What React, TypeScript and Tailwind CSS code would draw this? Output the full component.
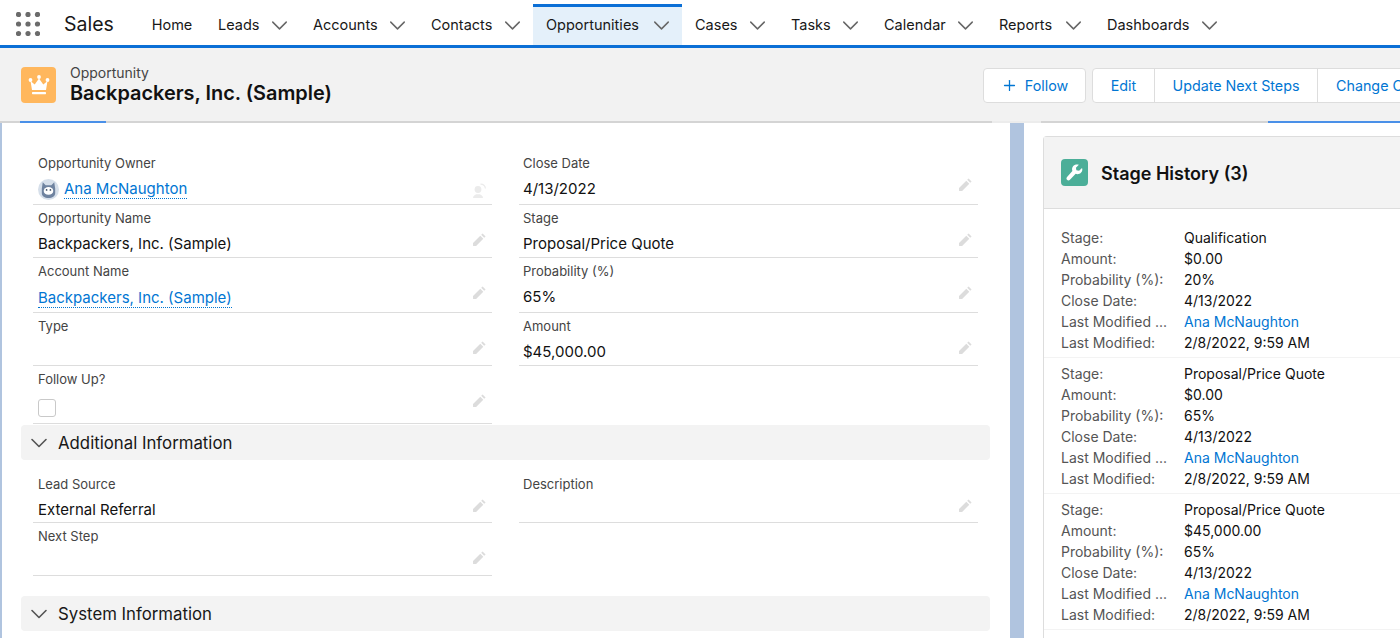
import { ChevronDown, Plus } from 'lucide-react';

const navItems = [
  { name: 'Leads', width: 'w-[95px]' },
  { name: 'Accounts', width: 'w-[118px]' },
  { name: 'Contacts', width: 'w-[115px]' },
  { name: 'Opportunities', width: 'w-[149px]' },
  { name: 'Cases', width: 'w-[96px]' },
  { name: 'Tasks', width: 'w-[93px]' },
  { name: 'Calendar', width: 'w-[115px]' },
  { name: 'Reports', width: 'w-[108px]' },
  { name: 'Dashboards', width: 'w-[136px]' },
];

function Pencil() {
  return (
    <svg viewBox="0 0 16 16" className="w-[16px] h-[16px] text-[#dcdcdc]" fill="currentColor">
      <path d="M11.6 1.4l3 3-1.4 1.4-3-3zM9.3 3.7l3 3-7.2 7.2-3 .1-.1-3z" />
    </svg>
  );
}

function ChangeOwner() {
  return (
    <svg viewBox="0 0 16 16" className="w-[16px] h-[16px] text-[#ebebeb]" fill="currentColor">
      <circle cx="7" cy="6.5" r="3.4" />
      <path d="M2 15c0-2.4 2-3.2 3.4-3.7h3.2c1.4.5 3.4 1.3 3.4 3.7z" />
      <path d="M9.5 1.2c2.6 0 4.6 1.7 4.9 4.3" fill="none" stroke="currentColor" strokeWidth="1.2" />
    </svg>
  );
}

function Field({ label, children, height, icon = 'pencil', right }: { label: string; children?: React.ReactNode; height: string; icon?: 'pencil' | 'owner'; right?: boolean }) {
  return (
    <div className={`relative border-b border-[#dddddd] ${right ? 'pl-[4px]' : 'pl-[5px]'} ${height}`}>
      <div className="text-[13px] leading-[18px] text-[#444444] pt-[4px] h-[24px]">{label}</div>
      <div className="text-[15px] leading-[20px] text-[#111111] mt-[5px]">{children}</div>
      {icon === 'pencil' && (
        <div className="absolute right-[5px] top-[27px]">
          <Pencil />
        </div>
      )}
      {icon === 'owner' && (
        <div className="absolute right-[5px] bottom-[5px]">
          <ChangeOwner />
        </div>
      )}
    </div>
  );
}

function Section({ title }: { title: string }) {
  return (
    <div className="ml-[21px] mr-[20px] h-[35px] flex items-center rounded-[4px] bg-[#f3f3f3] pl-[4px] gap-[5px] text-[#181818]">
      <ChevronDown className="w-[28px] h-[28px] text-[#555555]" strokeWidth={1.4} />
      <span className="text-[16.8px] leading-[24px]">{title}</span>
    </div>
  );
}

function HistoryRow({ label, value, link }: { label: string; value: string; link?: boolean }) {
  return (
    <div className="flex h-[21px] items-center text-[14px]">
      <span className="w-[123px] shrink-0 text-[#555555]">{label}</span>
      <span className={link ? 'text-[#0176d3]' : 'text-[#111111]'}>{value}</span>
    </div>
  );
}

function HistoryGroup({ stage, amount, probability }: { stage: string; amount: string; probability: string }) {
  return (
    <div className="pl-[17px] pb-[4px] pt-[5px] border-b border-[#f3f3f3]">
      <HistoryRow label="Stage:" value={stage} />
      <HistoryRow label="Amount:" value={amount} />
      <HistoryRow label="Probability (%):" value={probability} />
      <HistoryRow label="Close Date:" value="4/13/2022" />
      <HistoryRow label="Last Modified ..." value="Ana McNaughton" link />
      <HistoryRow label="Last Modified:" value="2/8/2022, 9:59 AM" />
    </div>
  );
}

export default function App() {
  return (
    <div className="w-[1400px] h-[638px] overflow-hidden bg-white font-['Inter',sans-serif] flex flex-col">
      {/* App nav */}
      <nav className="h-[48px] shrink-0 border-b-[3px] border-[#0b6fd6] flex items-stretch">
        <div className="w-[64px] flex items-center pl-[16px] pt-[3px] shrink-0">
          <svg viewBox="0 0 24 24" className="w-[24px] h-[24px] text-[#6b6b6b]" fill="currentColor">
            {[2.5, 12, 21.5].map((y) =>
              [2.5, 12, 21.5].map((x) => <circle key={`${x}-${y}`} cx={x} cy={y} r="2.6" />)
            )}
          </svg>
        </div>
        <div className="w-[75px] flex items-center pt-[5px] text-[19.5px] text-[#181818] shrink-0">Sales</div>
        <div className="w-[66px] flex items-center justify-center pt-[5px] text-[14.5px] text-[#181818] shrink-0">Home</div>
        {navItems.map((item) => (
          <div
            key={item.name}
            className={`flex items-center justify-between px-[13px] text-[14.5px] text-[#181818] shrink-0 mt-[4px] border-t-[3px] ${item.width} ${
              item.name === 'Opportunities' ? 'bg-[#e4f0fa] border-[#0b6fd6]' : 'border-transparent'
            }`}
          >
            <span className="-mt-[3px]">{item.name}</span>
            <ChevronDown className="w-[27px] h-[27px] text-[#666666] -mr-[6px] -mt-[1px]" strokeWidth={1.3} />
          </div>
        ))}
      </nav>

      {/* Record header */}
      <header className="relative h-[75px] shrink-0 bg-[#f2f2f2] border-b-[2px] border-[#d4d4d4] flex items-center justify-between">
        <div className="flex items-center pl-[21px] gap-[14px]">
          <div className="w-[35px] h-[36px] rounded-[4px] bg-[#ffb75d] flex items-center justify-center">
            <svg viewBox="0 0 24 24" className="w-[24px] h-[24px] text-white" fill="currentColor">
              <circle cx="3.5" cy="7" r="1.9" />
              <circle cx="12" cy="4" r="1.9" />
              <circle cx="20.5" cy="7" r="1.9" />
              <path d="M3.5 8l4.2 3.4L12 5.5l4.3 5.9L20.5 8 19 17H5z" />
              <rect x="5" y="19" width="14" height="2.2" rx="0.6" />
            </svg>
          </div>
          <div className="-mt-[1px]">
            <div className="text-[14px] leading-[18px] text-[#444444]">Opportunity</div>
            <div className="text-[19.9px] leading-[22px] font-semibold text-[#111111]">Backpackers, Inc. (Sample)</div>
          </div>
        </div>
        <div className="flex w-[417px] shrink-0 gap-[6px] overflow-hidden mt-[2px] text-[14.3px] text-[#0176d3]">
          <div className="w-[103px] h-[35px] shrink-0 flex items-center justify-center gap-[7px] bg-white border border-[#dddddd] rounded-[4px]">
            <Plus className="w-[17px] h-[17px]" strokeWidth={1.8} />
            Follow
          </div>
          <div className="flex h-[35px] shrink-0 bg-white border border-[#dddddd] rounded-l-[4px]">
            <div className="w-[62px] flex items-center justify-center border-r border-[#dddddd]">Edit</div>
            <div className="w-[163px] flex items-center justify-center border-r border-[#dddddd]">Update Next Steps</div>
            <div className="w-[120px] flex items-center pl-[18px] whitespace-nowrap">Change Close Date</div>
          </div>
        </div>
        <div className="absolute left-[20px] -bottom-[2px] w-[86px] h-[2px] bg-[#4a90e8]" />
        <div className="absolute left-[992px] -bottom-[2px] w-[49px] h-[2px] bg-[#ececec]" />
        <div className="absolute left-[1268px] -bottom-[2px] w-[132px] h-[2px] bg-[#4a90e8]" />
      </header>

      <main className="flex flex-1 min-h-0">
        {/* Details column */}
        <section className="w-[1010px] shrink-0 border-l-[2px] border-[#b0c4df] pt-[27px] overflow-hidden">
          <div className="-ml-[2px]">
            <div className="grid grid-cols-[459px_459px] gap-x-[27px] pl-[33px]">
              <Field label="Opportunity Owner" height="h-[55px]" icon="owner">
                <div className="flex items-center gap-[5px]">
                  <svg viewBox="0 0 22 22" className="w-[21px] h-[21px] shrink-0">
                    <circle cx="11" cy="11" r="11" fill="#d6dfea" />
                    <path d="M5 3.5l3 3h6l3-3 1 6.5v5c0 3-3 5-7 5s-7-2-7-5v-5z" fill="#6f83a0" />
                    <ellipse cx="11" cy="12.5" rx="5" ry="4" fill="#fff" />
                    <circle cx="9" cy="11.5" r="0.9" fill="#3f4f66" />
                    <circle cx="13" cy="11.5" r="0.9" fill="#3f4f66" />
                  </svg>
                  <span className="text-[#0176d3] border-b border-dotted border-[#0176d3] leading-[18px]">Ana McNaughton</span>
                </div>
              </Field>
              <Field label="Close Date" height="h-[55px]" right>
                4/13/2022
              </Field>
              <Field label="Opportunity Name" height="h-[53px]">
                Backpackers, Inc. (Sample)
              </Field>
              <Field label="Stage" height="h-[53px]" right>
                Proposal/Price Quote
              </Field>
              <Field label="Account Name" height="h-[55px]">
                <span className="inline-block mt-[2px] text-[#0176d3] border-b border-dotted border-[#0176d3] leading-[18px]">Backpackers, Inc. (Sample)</span>
              </Field>
              <Field label="Probability (%)" height="h-[55px]" right>
                65%
              </Field>
              <Field label="Type" height="h-[53px]" />
              <Field label="Amount" height="h-[53px]" right>
                $45,000.00
              </Field>
              <Field label="Follow Up?" height="h-[58px]">
                <div className="w-[18px] h-[18px] mt-[9px] rounded-[3px] border border-[#c9c9c9] bg-white" />
              </Field>
            </div>
            <div className="mt-[1px]">
              <Section title="Additional Information" />
            </div>
            <div className="grid grid-cols-[459px_459px] gap-x-[27px] pl-[33px] mt-[11px]">
              <Field label="Lead Source" height="h-[52px]">
                External Referral
              </Field>
              <Field label="Description" height="h-[52px]" right />
              <Field label="Next Step" height="h-[53px]" />
            </div>
            <div className="mt-[20px]">
              <Section title="System Information" />
            </div>
          </div>
        </section>

        <div className="w-[14px] shrink-0 bg-[#b0c4df]" />

        {/* Related list */}
        <aside className="flex-1 min-w-0 pl-[19px] pt-[13px] overflow-hidden">
          <div className="w-[400px] h-[520px] rounded-tl-[4px] border-l border-t border-[#dddddd]">
            <div className="h-[72px] bg-[#f3f3f3] border-b border-[#dddddd] flex items-center pl-[17px] gap-[13px]">
              <div className="w-[27px] h-[27px] rounded-[4px] bg-[#4bae98] flex items-center justify-center">
                <svg viewBox="0 0 24 24" className="w-[19px] h-[19px] text-white" fill="currentColor">
                  <path d="M21.5 6.2l-3.7 3.7-3.4-.6-.6-3.4 3.7-3.7c-2.3-.9-5-.4-6.8 1.4-1.8 1.8-2.2 4.3-1.4 6.4L2.6 17.7c-1 1-1 2.6 0 3.6s2.6 1 3.6 0l7.3-7.6c2.2.9 4.8.4 6.6-1.4 1.8-1.8 2.3-4.2 1.4-6.1z" />
                </svg>
              </div>
              <span className="text-[18px] font-semibold text-[#111111] pt-[1px]">Stage History (3)</span>
            </div>
            <div className="pt-[13px]">
              <HistoryGroup stage="Qualification" amount="$0.00" probability="20%" />
              <HistoryGroup stage="Proposal/Price Quote" amount="$0.00" probability="65%" />
              <HistoryGroup stage="Proposal/Price Quote" amount="$45,000.00" probability="65%" />
            </div>
          </div>
        </aside>
      </main>
    </div>
  );
}
